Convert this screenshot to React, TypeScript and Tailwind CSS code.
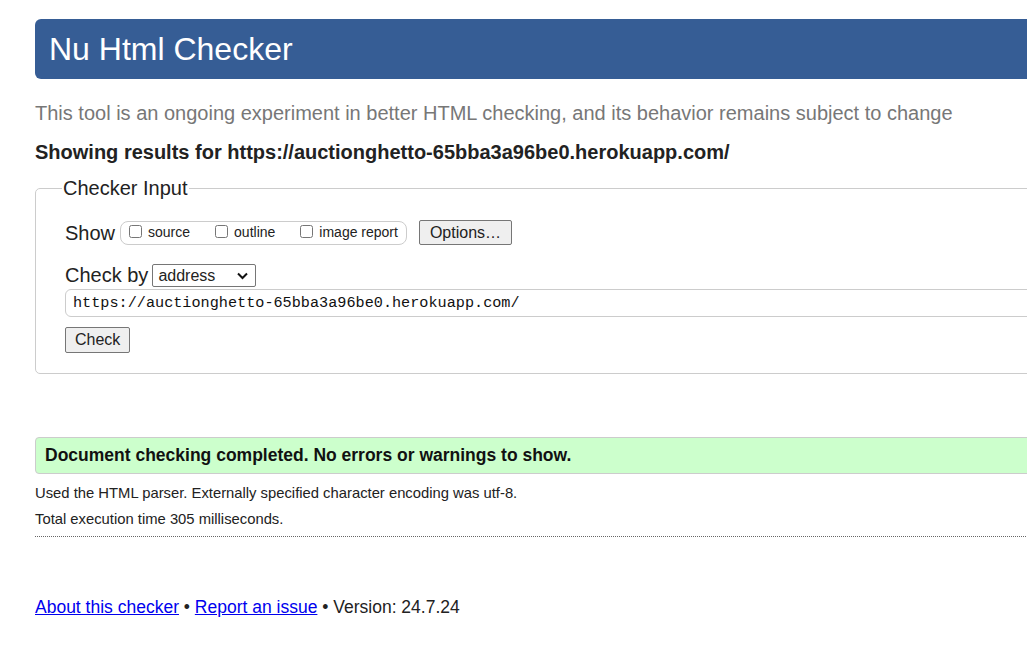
import { useState } from "react";

export default function App() {
  const [showSource, setShowSource] = useState(false);
  const [showOutline, setShowOutline] = useState(false);
  const [imageReport, setImageReport] = useState(false);
  const url = "https://auctionghetto-65bba3a96be0.herokuapp.com/";

  return (
    <div className="w-screen h-screen overflow-hidden bg-white font-['Liberation_Sans',Arial,sans-serif] text-[#222]">
      <div className="w-[1200px] pl-[35px] pt-[19px]">
        <h1 className="h-[60px] rounded-l-[6px] bg-[#365d95] pl-[14px] text-[32px] leading-[60px] text-white">
          Nu Html Checker
        </h1>
        <p className="mt-[22px] text-[20px] leading-[24px] text-[#777]">
          This tool is an ongoing experiment in better HTML checking, and its behavior remains subject to change
        </p>
        <p className="mt-[15px] text-[20px] font-bold leading-[24px] text-[#222]">
          Showing results for {url}
        </p>

        <fieldset className="mt-[12px] rounded-[5px] border border-[#ccc] pb-[20px] pl-[29px] pr-4">
          <legend className="-ml-[3px] px-[1px] text-[20px] leading-[24px]">Checker Input</legend>

          <div className="mt-[20px] flex items-center">
            <span className="text-[20px] leading-[24px]">Show</span>
            <div className="ml-[5px] flex h-[24px] items-center rounded-[8px] border border-[#ccc] pl-[8px] pr-[8px] text-[14px] text-[#222]">
              <label className="flex items-center">
                <input type="checkbox" checked={showSource} onChange={() => setShowSource(!showSource)} className="m-0 -mt-[3px] h-[13px] w-[13px]" />
                <span className="ml-[6px]">source</span>
              </label>
              <label className="ml-[25px] flex items-center">
                <input type="checkbox" checked={showOutline} onChange={() => setShowOutline(!showOutline)} className="m-0 -mt-[3px] h-[13px] w-[13px]" />
                <span className="ml-[6px]">outline</span>
              </label>
              <label className="ml-[25px] flex items-center">
                <input type="checkbox" checked={imageReport} onChange={() => setImageReport(!imageReport)} className="m-0 -mt-[3px] h-[13px] w-[13px]" />
                <span className="ml-[6px]">image report</span>
              </label>
            </div>
            <button className="ml-[12px] h-[25px] rounded-[2px] border border-[#767676] bg-[#efefef] px-[10px] text-[16px] leading-[20px]">
              Options…
            </button>
          </div>

          <div className="mt-[18px] flex items-center">
            <span className="text-[20px] leading-[24px]">Check by</span>
            <div className="relative ml-[4px] h-[23px] w-[104px] rounded-[2px] border border-[#767676] bg-white">
              <span className="absolute left-[5px] top-[1px] text-[16px] leading-[20px]">address</span>
              <svg className="absolute right-[7px] top-[7px]" width="11" height="8" viewBox="0 0 11 8">
                <path d="M1 1.5 L5.5 6 L10 1.5" fill="none" stroke="#111" strokeWidth="2" />
              </svg>
            </div>
          </div>

          <div className="mt-[2px] flex h-[28px] items-center rounded-l-[6px] border border-[#ccc] pl-[7px] font-['Liberation_Mono',monospace] text-[15.2px] text-[#111]">
            {url}
          </div>

          <button className="mt-[10px] h-[26px] rounded-[2px] border border-[#767676] bg-[#efefef] px-[9px] text-[16px] leading-[20px]">
            Check
          </button>
        </fieldset>

        <div className="mt-[63px] flex h-[37px] items-center rounded-l-[4px] border border-[#ccc] bg-[#ccffcc] pl-[9px] text-[17.5px] font-bold text-[#111]">
          Document checking completed. No errors or warnings to show.
        </div>
        <p className="mt-[10px] text-[14.8px] leading-[18px] text-[#222]">
          Used the HTML parser. Externally specified character encoding was utf-8.
        </p>
        <p className="mt-[8px] text-[14.8px] leading-[18px] text-[#222]">Total execution time 305 milliseconds.</p>
        <div className="mt-[8px] border-b border-dotted border-[#666]" />

        <p className="mt-[59px] text-[17.5px] leading-[22px] text-[#222]">
          <a href="#" className="text-[#00e] underline">About this checker</a>
          {" • "}
          <a href="#" className="text-[#00e] underline">Report an issue</a>
          {" • Version: 24.7.24"}
        </p>
      </div>
    </div>
  );
}
